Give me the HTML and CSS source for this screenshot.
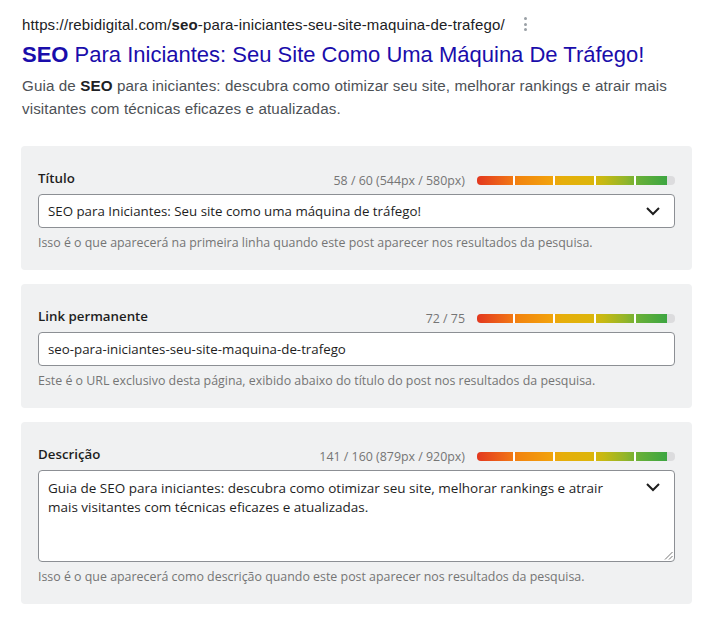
FILE: index.html
```html
<!DOCTYPE html>
<html lang="pt-BR">
<head>
<meta charset="utf-8">
<title>SEO preview</title>
<link rel="stylesheet" href="styles.css">
</head>
<body>
<section class="serp">
  <div class="serp-url-row">
    <span class="serp-url">https://rebidigital.com/<b>seo</b>-para-iniciantes-seu-site-maquina-de-trafego/</span>
    <span class="kebab"><i></i><i></i><i></i></span>
  </div>
  <div class="serp-title"><b>SEO</b> Para Iniciantes: Seu Site Como Uma Máquina De Tráfego!</div>
  <p class="serp-desc">Guia de <b>SEO</b> para iniciantes: descubra como otimizar seu site, melhorar rankings e atrair mais visitantes com técnicas eficazes e atualizadas.</p>
</section>

<section class="panel">
  <div class="panel-head">
    <span class="label">Título</span>
    <span class="counter">58 / 60 (544px / 580px)</span>
    <span class="meter"><span class="fill"></span><span class="seps"><i></i><i></i><i></i><i></i></span></span>
  </div>
  <div class="field">
    <span class="field-text">SEO para Iniciantes: Seu site como uma máquina de tráfego!</span>
    <svg class="chev" width="16" height="10" viewBox="0 0 16 10"><polyline points="2,2 8,8 14,2" fill="none" stroke="#1e1e1e" stroke-width="2"/></svg>
  </div>
  <p class="help">Isso é o que aparecerá na primeira linha quando este post aparecer nos resultados da pesquisa.</p>
</section>

<section class="panel">
  <div class="panel-head">
    <span class="label">Link permanente</span>
    <span class="counter">72 / 75</span>
    <span class="meter"><span class="fill"></span><span class="seps"><i></i><i></i><i></i><i></i></span></span>
  </div>
  <div class="field">
    <span class="field-text">seo-para-iniciantes-seu-site-maquina-de-trafego</span>
  </div>
  <p class="help">Este é o URL exclusivo desta página, exibido abaixo do título do post nos resultados da pesquisa.</p>
</section>

<section class="panel">
  <div class="panel-head">
    <span class="label">Descrição</span>
    <span class="counter">141 / 160 (879px / 920px)</span>
    <span class="meter"><span class="fill"></span><span class="seps"><i></i><i></i><i></i><i></i></span></span>
  </div>
  <div class="field field-area">
    <span class="field-text">Guia de SEO para iniciantes: descubra como otimizar seu site, melhorar rankings e atrair mais visitantes com técnicas eficazes e atualizadas.</span>
    <svg class="chev" width="16" height="10" viewBox="0 0 16 10"><polyline points="2,2 8,8 14,2" fill="none" stroke="#1e1e1e" stroke-width="2"/></svg>
    <svg class="grip" width="9" height="9" viewBox="0 0 9 9"><line x1="8.5" y1="1" x2="1" y2="8.5" stroke="#777" stroke-width="1"/><line x1="8.5" y1="5" x2="5" y2="8.5" stroke="#777" stroke-width="1"/></svg>
  </div>
  <p class="help">Isso é o que aparecerá como descrição quando este post aparecer nos resultados da pesquisa.</p>
</section>
</body>
</html>
```

FILE: styles.css
```css
html, body {
  margin: 0;
  padding: 0;
  background: #ffffff;
}

body {
  font-family: "Open Sans", "Noto Sans", sans-serif;
  color: #1e1e1e;
}

.serp {
  padding: 14px 21px 0 22px;
  font-family: "Liberation Sans", Arial, sans-serif;
}

.serp-url-row {
  display: flex;
  align-items: center;
  height: 20px;
}

.serp-url {
  font-size: 15px;
  color: #202124;
  letter-spacing: 0.15px;
}

.serp-url b {
  font-weight: 700;
}

.kebab {
  display: flex;
  flex-direction: column;
  gap: 2.5px;
  margin-left: 19px;
}

.kebab i {
  display: block;
  width: 3px;
  height: 3px;
  border-radius: 50%;
  background: #9aa0a6;
}

.serp-title {
  margin-top: 8px;
  font-size: 22px;
  line-height: 26px;
  color: #1a0dab;
}

.serp-title b {
  font-weight: 700;
}

.serp-desc {
  margin: 6px 0 0;
  font-size: 15.2px;
  letter-spacing: 0.1px;
  line-height: 23px;
  color: #4d5156;
}

.serp-desc b {
  color: #202124;
  font-weight: 700;
}

.panel {
  margin: 0 21px 14px;
  background: #f0f1f2;
  border-radius: 4px;
  padding: 22px 17px 19px;
}

.serp + .panel {
  margin-top: 26px;
}

.panel-head {
  display: flex;
  align-items: center;
  height: 20px;
  margin-bottom: 6px;
}

.label {
  font-size: 13.3px;
  font-weight: 600;
  color: #1e1e1e;
  flex: 1;
}

.counter {
  font-size: 12.4px;
  color: #757575;
  margin-top: 4px;
}

.meter {
  position: relative;
  width: 198px;
  height: 9px;
  margin-left: 12px;
  margin-top: 5px;
  background: #dcdcde;
  border-radius: 4px;
  overflow: hidden;
}

.fill {
  display: block;
  width: 96%;
  height: 100%;
  background: linear-gradient(to right, #e3381f 0%, #ef6d17 16%, #f2850f 22%, #f2a00c 38%, #e6ae0b 45%, #ddb50b 60%, #c4b914 67%, #93b52a 78%, #64af39 86%, #3da642 100%);
}

.seps {
  position: absolute;
  inset: 0;
  display: flex;
  justify-content: space-between;
  padding: 0 39px 0 36px;
}

.seps i {
  display: block;
  width: 2px;
  height: 100%;
  background: #ffffff;
}

.field {
  display: flex;
  align-items: center;
  height: 34px;
  box-sizing: border-box;
  background: #ffffff;
  border: 1px solid #8c8f94;
  border-radius: 4px;
  padding: 0 13px 0 9px;
}

.field-text {
  flex: 1;
  font-size: 13.3px;
  color: #1e1e1e;
}

.chev {
  flex: none;
  margin-left: 8px;
}

.field-area {
  position: relative;
  align-items: flex-start;
  height: 92px;
  padding-top: 8px;
}

.field-area .field-text {
  font-size: 13.5px;
  line-height: 19px;
  padding-right: 18px;
}

.field-area .chev {
  margin-top: 3px;
}

.grip {
  position: absolute;
  right: 1px;
  bottom: 1px;
}

.help {
  margin: 7px 0 0;
  font-size: 12.4px;
  line-height: 16px;
  color: #757575;
}
```
